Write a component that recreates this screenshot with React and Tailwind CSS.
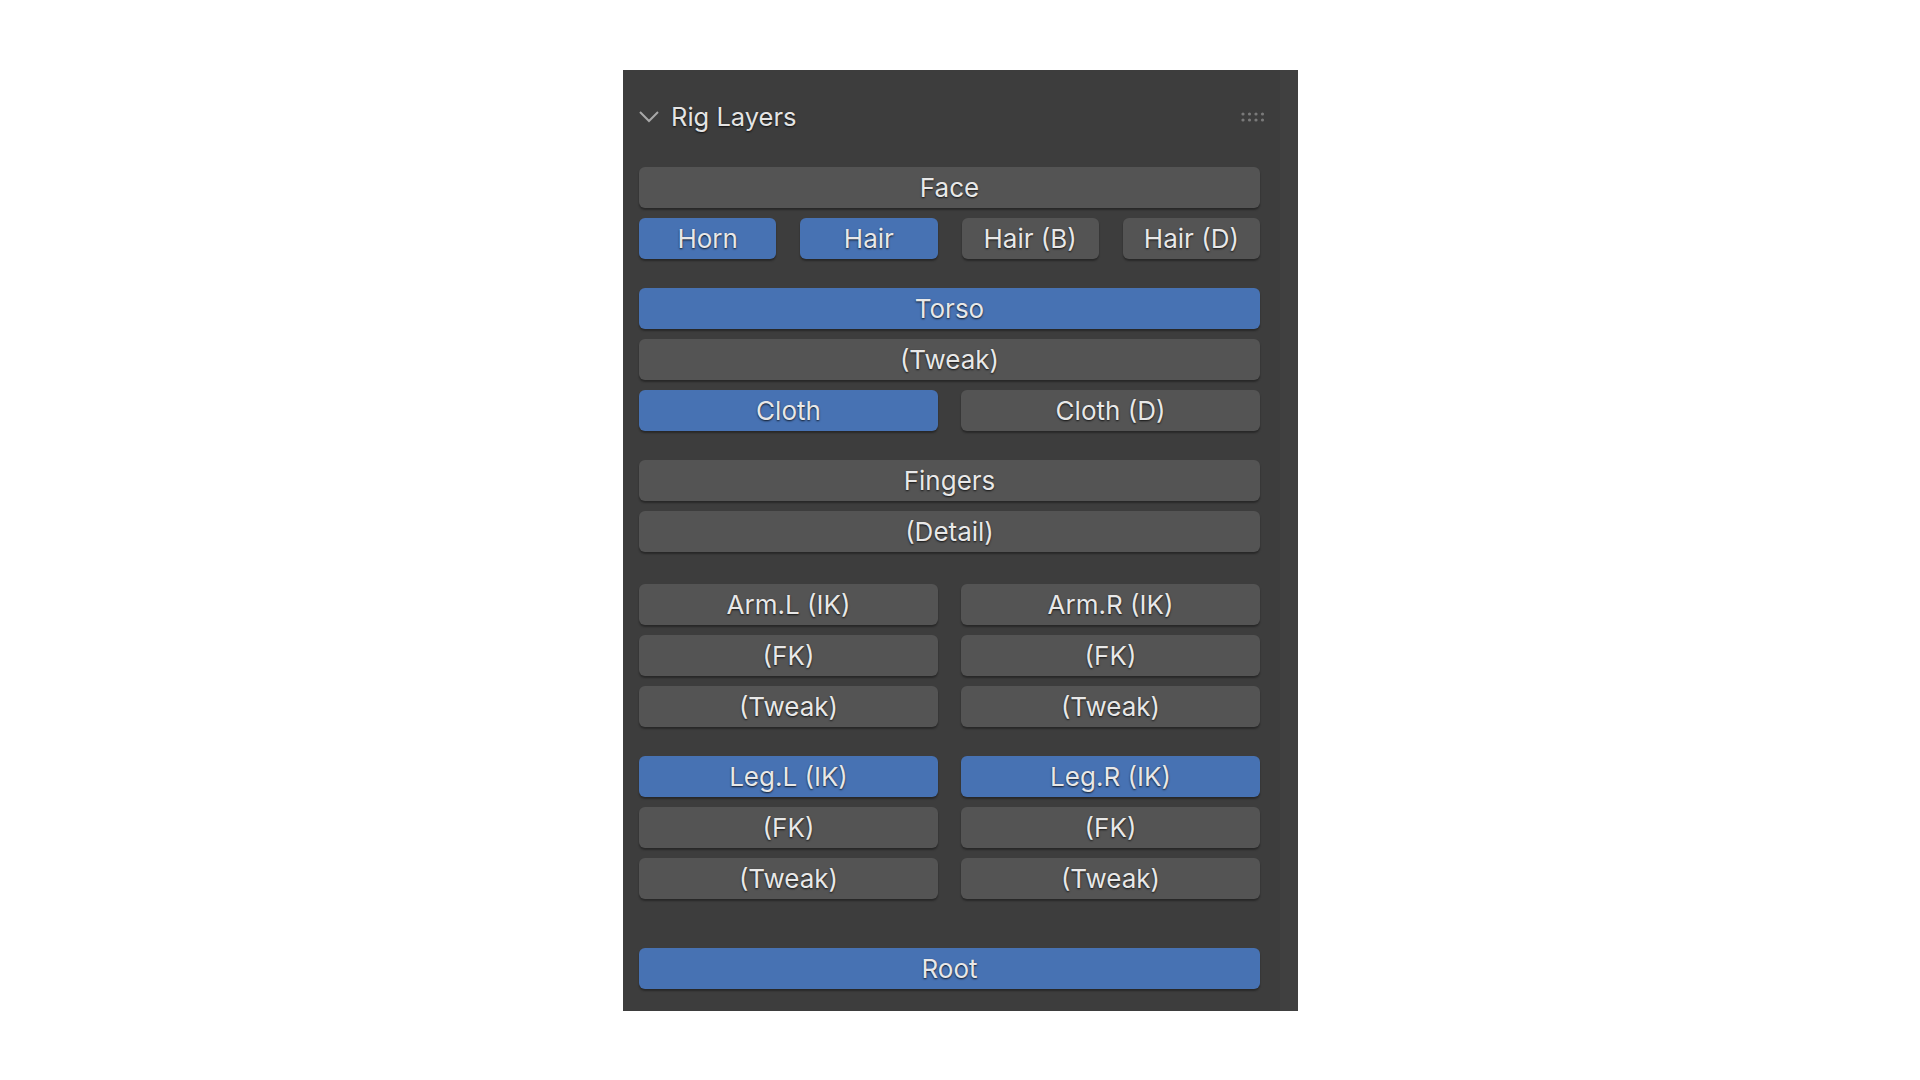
import React from "react";

const font = { fontFamily: "Inter, 'Noto Sans', 'DejaVu Sans', sans-serif" };

function Btn({ label, on }) {
  return (
    <div
      className={
        "flex-1 h-[41px] rounded-[6px] flex items-center justify-center text-[26px] text-[#e8e8e8] shadow-[0_2px_2px_rgba(0,0,0,0.35)] [text-shadow:0_1px_2px_rgba(0,0,0,0.8)] " +
        (on ? "bg-[#4772b3]" : "bg-[#545454]")
      }
    >
      {label}
    </div>
  );
}

function Row({ items, gap = "gap-[23px]" }) {
  return (
    <div className={"flex " + gap}>
      {items.map(([l, on], i) => (
        <Btn key={i} label={l} on={on} />
      ))}
    </div>
  );
}

function Group({ children, className = "" }) {
  return <div className={"flex flex-col gap-[10px] " + className}>{children}</div>;
}

export default function App() {
  return (
    <div className="w-[1920px] h-[1080px] bg-white" style={font}>
      <div className="pt-[70px] pl-[623px]">
        <div className="w-[675px] h-[941px] bg-[#3d3d3d] flex">
          <div className="flex-1 flex flex-col">
            <div className="h-[97px] flex items-center pl-[15px] pr-[14px] pb-[3px]">
              <svg width="22" height="14" viewBox="0 0 22 14" className="mr-[11px]">
                <path d="M2 2 L11 11 L20 2" fill="none" stroke="#a8a8a8" strokeWidth="2" />
              </svg>
              <span className="text-[25.5px] text-[#e4e4e4] [text-shadow:0_1px_2px_rgba(0,0,0,0.8)]">Rig Layers</span>
              <div className="flex-1" />
              <svg width="26" height="12" viewBox="0 0 26 12">
                {[0, 1, 2, 3].map((c) =>
                  [0, 1].map((r) => (
                    <circle key={c + "-" + r} cx={3 + c * 6.5} cy={3 + r * 6} r="1.6" fill="#7a7a7a" />
                  ))
                )}
              </svg>
            </div>
            <div className="pl-[16px] pr-[20px] flex flex-col">
              <Group>
                <Row items={[["Face", false]]} />
                <Row gap="gap-[24px]" items={[["Horn", true], ["Hair", true], ["Hair (B)", false], ["Hair (D)", false]]} />
              </Group>
              <Group className="mt-[29px]">
                <Row items={[["Torso", true]]} />
                <Row items={[["(Tweak)", false]]} />
                <Row items={[["Cloth", true], ["Cloth (D)", false]]} />
              </Group>
              <Group className="mt-[29px]">
                <Row items={[["Fingers", false]]} />
                <Row items={[["(Detail)", false]]} />
              </Group>
              <Group className="mt-[32px]">
                <Row items={[["Arm.L (IK)", false], ["Arm.R (IK)", false]]} />
                <Row items={[["(FK)", false], ["(FK)", false]]} />
                <Row items={[["(Tweak)", false], ["(Tweak)", false]]} />
              </Group>
              <Group className="mt-[29px]">
                <Row items={[["Leg.L (IK)", true], ["Leg.R (IK)", true]]} />
                <Row items={[["(FK)", false], ["(FK)", false]]} />
                <Row items={[["(Tweak)", false], ["(Tweak)", false]]} />
              </Group>
              <div className="mt-[49px]">
                <Row items={[["Root", true]]} />
              </div>
            </div>
          </div>
          <div className="w-[18px] bg-[#404040]" />
        </div>
      </div>
    </div>
  );
}
